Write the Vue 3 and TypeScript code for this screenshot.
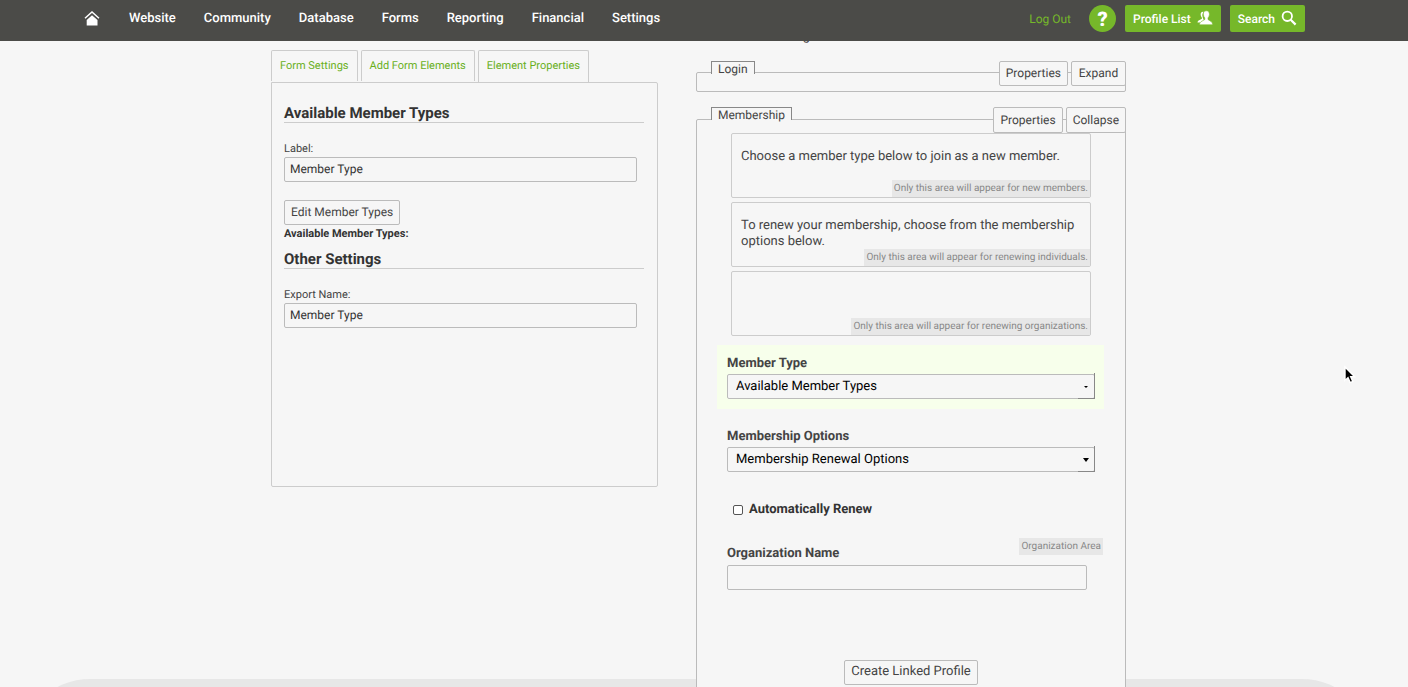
<script setup lang="ts">
import { ref } from 'vue'

const navItems = ['Website', 'Community', 'Database', 'Forms', 'Reporting', 'Financial', 'Settings']
const tabs = ['Form Settings', 'Add Form Elements', 'Element Properties']
const activeTab = ref(2)

const label = ref('Member Type')
const exportName = ref('Member Type')
const memberType = ref('Available Member Types')
const membershipOption = ref('Membership Renewal Options')
const autoRenew = ref(false)
const organization = ref('')

const messages = [
  { text: 'Choose a member type below to join as a new member.', note: 'Only this area will appear for new members.' },
  { text: 'To renew your membership, choose from the membership options below.', note: 'Only this area will appear for renewing individuals.' },
  { text: '', note: 'Only this area will appear for renewing organizations.' },
]
</script>

<template>
  <div class="page">
    <header class="topbar">
      <div class="topbar-inner">
        <nav class="nav">
          <a href="#" class="home" aria-label="Home">
            <svg width="16" height="16" viewBox="0 1 16 16">
              <path d="M8 5.300 13.500 10V15.400H2.700V10Z" fill="#fff" />
              <path d="M1 8.200 8 1.900 15 8.200" fill="none" stroke="#fff" stroke-width="1.500" />
            </svg>
          </a>
          <a v-for="item in navItems" :key="item" href="#">{{ item }}</a>
        </nav>
        <div class="account">
          <a href="#" class="logout">Log Out</a>
          <button type="button" class="help" aria-label="Help">?</button>
          <button type="button" class="green">
            Profile List
            <svg width="16" height="16" viewBox="0 1 16 16">
              <path d="M6.4 1.8C4.3 1.6 3.4 3.1 3.7 5.1c.1 1.1.7 2 1.2 2.6v1.1L1.600 10.400Q.6 11 .5 12.400H3.300L7 10.400 5.800 7.800Q4.700 4.500 6.400 1.800Z" fill="#fff" />
              <path d="M9.300.8C7 .8 6.100 2.400 6.400 4.700c.1 1.500.8 2.500 1.400 3.200v1.600L4.200 11.600Q2.500 12.600 2.400 14.800H15.700Q15.600 12.600 14.200 11.600L11 9.500V7.900c.7-.8 1.300-1.900 1.400-3.200C12.600 2.400 11.600.8 9.300.8Z" fill="#fff" stroke="#76b82a" stroke-width=".6" />
            </svg>
          </button>
          <button type="button" class="green">
            Search
            <svg width="16" height="16" viewBox="0 1 16 16">
              <circle cx="6.300" cy="6.300" r="4.700" fill="none" stroke="#fff" stroke-width="1.800" />
              <path d="m9.700 9.700 4.900 4.900" stroke="#fff" stroke-width="2.200" />
            </svg>
          </button>
        </div>
      </div>
    </header>

    <main class="content">
      <section class="editor">
        <div class="tabs" role="tablist">
          <button
            v-for="(tab, i) in tabs"
            :key="tab"
            type="button"
            role="tab"
            :aria-selected="activeTab === i"
            :class="{ active: activeTab === i }"
            @click="activeTab = i"
          >{{ tab }}</button>
        </div>
        <div class="panel">
          <h2>Available Member Types</h2>
          <label for="label" class="small-label">Label:</label>
          <input id="label" v-model="label" type="text" class="text-input" />
          <button type="button" class="btn edit">Edit Member Types</button>
          <strong>Available Member Types:</strong>
          <h2>Other Settings</h2>
          <label for="export" class="small-label">Export Name:</label>
          <input id="export" v-model="exportName" type="text" class="text-input" />
        </div>
      </section>

      <section class="preview">
        <p class="intro">Use this form to register as a new member or to renew.</p>

        <section class="group login" aria-labelledby="login-title">
          <div class="group-head">
            <h3 id="login-title">Login</h3>
            <div class="actions">
              <button type="button" class="btn">Properties</button>
              <button type="button" class="btn">Expand</button>
            </div>
          </div>
        </section>

        <section class="group membership" aria-labelledby="membership-title">
          <div class="group-head">
            <h3 id="membership-title">Membership</h3>
            <div class="actions">
              <button type="button" class="btn">Properties</button>
              <button type="button" class="btn">Collapse</button>
            </div>
          </div>

          <div class="messages">
            <div v-for="message in messages" :key="message.note" class="message">
              <p>{{ message.text }}</p>
              <span class="note">{{ message.note }}</span>
            </div>
          </div>

          <div class="field selected">
            <label for="member-type">Member Type</label>
            <div class="select-wrap">
              <select id="member-type" v-model="memberType">
                <option>Available Member Types</option>
              </select>
              <svg class="arrow" width="6" height="4" viewBox="0 0 6 4"><path d="M1 1H5L3 3Z" /></svg>
            </div>
          </div>

          <div class="field">
            <label for="membership-options">Membership Options</label>
            <div class="select-wrap">
              <select id="membership-options" v-model="membershipOption">
                <option>Membership Renewal Options</option>
              </select>
              <svg class="arrow" width="6" height="4" viewBox="0 0 6 4"><path d="M0 0H6L3 4Z" /></svg>
            </div>
          </div>

          <label class="check">
            <input v-model="autoRenew" type="checkbox" />
            Automatically Renew
          </label>

          <div class="organization">
            <span class="note area">Organization Area</span>
            <label for="organization">Organization Name</label>
            <input id="organization" v-model="organization" type="text" class="text-input" />
          </div>

          <div class="create">
            <button type="button" class="btn">Create Linked Profile</button>
          </div>
        </section>
      </section>
    </main>

    <div class="footer-band"></div>

    <svg class="pointer" width="14" height="20" viewBox="0 0 14 20">
      <path d="M2 2V15.500L5 12.700 7.200 17.600 9.800 16.400 7.700 11.700H11.700Z" fill="#000" stroke="#fff" stroke-width="1.400" />
    </svg>
  </div>
</template>

<style>
body {
  margin: 0;
  background: #f6f6f6;
}
</style>

<style scoped>
* {
  box-sizing: border-box;
}

.page {
  position: relative;
  height: 100vh;
  overflow: hidden;
  background: #f6f6f6;
  color: #444;
  font-family: Roboto, "Liberation Sans", sans-serif;
  font-size: 13px;
  line-height: 16px;
  text-rendering: geometricPrecision;
}

button,
input,
select {
  font: inherit;
  text-rendering: inherit;
}

h2,
h3,
p {
  margin: 0;
}

.topbar {
  position: relative;
  z-index: 2;
  padding: 5px 103px 9px 84px;
  background: #4b4b48;
}

.topbar-inner,
.nav,
.account {
  display: flex;
  align-items: center;
}

.topbar-inner {
  justify-content: space-between;
}

.nav {
  gap: 28px;
}

.nav a {
  color: #fff;
  font-weight: 500;
  text-decoration: none;
}

.nav .home {
  display: flex;
  width: 17px;
}

.home svg {
  flex: none;
}

.topbar svg {
  overflow: visible;
}

.account {
  gap: 9px;
}

.logout {
  margin-right: 9px;
  color: #76b82a;
  font-size: 12px;
  text-decoration: none;
}

.help,
.green {
  height: 27px;
  border: 0;
  background: #76b82a;
  color: #fff;
  font-weight: 500;
}

.help {
  width: 27px;
  padding: 0;
  border-radius: 50%;
  font-size: 20px;
  font-weight: 900;
}

.green {
  display: flex;
  align-items: center;
  gap: 6px;
  padding: 0 8px;
  border-radius: 2px;
  font-size: 12px;
}

.content {
  position: relative;
  z-index: 1;
  display: grid;
  grid-template-columns: 387fr 430fr;
  gap: 38px;
  width: 866px;
  max-width: 100%;
  margin: 0 auto;
  padding-right: 11px;
}

.editor {
  padding-top: 9px;
}

.tabs {
  display: flex;
  align-items: flex-start;
  gap: 3px;
}

.tabs button {
  height: 31px;
  padding: 0 8px;
  border: 1px solid #ccc;
  border-bottom: 0;
  border-radius: 2px 2px 0 0;
  background: #f6f6f6;
  color: #69b01c;
  font-size: 11px;
}

.tabs .active {
  height: 32px;
  padding-bottom: 1px;
}

.panel {
  display: flex;
  flex-direction: column;
  align-items: flex-start;
  height: 405px;
  padding: 21px 13px 12px 12px;
  border: 1px solid #ccc;
  border-radius: 0 2px 2px 2px;
}

.panel h2 {
  width: 100%;
  height: 19px;
  border-bottom: 1px solid #ccc;
  color: #333;
  font-size: 15px;
  line-height: 18px;
}

.small-label {
  margin-top: 18px;
  font-size: 11px;
}

.text-input {
  height: 25px;
  padding: 0 5px 1px;
  border: 1px solid #bbb;
  border-radius: 2px;
  background: #f6f6f6;
  color: #333;
}

.panel .text-input {
  width: calc(100% - 7px);
  font-size: 12px;
}

.btn {
  min-width: 55px;
  height: 25px;
  padding: 0 6px 1px;
  border: 1px solid #bbb;
  border-radius: 2px;
  background: #f6f6f6;
  color: #444;
  font-size: 12px;
}

.edit {
  margin-top: 18px;
}

.panel strong {
  margin: 1px 0 8px;
  color: #333;
  font-size: 11px;
}

.intro {
  height: 20px;
  margin-top: -12px;
  margin-bottom: 23px;
}

.group {
  border: 1px solid #bbb;
  border-radius: 2px;
  background: #f6f6f6;
}

.group-head {
  display: flex;
  align-items: flex-start;
  justify-content: space-between;
  margin: -12px -1px 0 14px;
}

.group-head h3 {
  height: 13px;
  padding: 0 6px;
  border: 1px solid #888;
  border-bottom: 0;
  background: #f6f6f6;
  font-size: 12px;
  font-weight: 400;
  line-height: 14px;
}

.actions {
  display: flex;
  gap: 3px;
}

.login {
  padding-bottom: 5px;
}

.membership {
  margin-top: 27px;
  padding-bottom: 40px;
}

.membership .group-head {
  margin-top: -13px;
}

.membership .group-head .btn {
  height: 26px;
  padding-bottom: 0;
}

.messages {
  display: grid;
  gap: 4px;
  margin: 0 34px;
}

.message {
  position: relative;
  min-height: 65px;
  padding: 15px 9px 0;
  border: 1px solid #ccc;
  border-radius: 2px;
}

.note {
  padding: 0 2px;
  background: #e7e7e7;
  color: #888;
  font-size: 10px;
  line-height: 17px;
}

.message .note {
  position: absolute;
  right: 0;
  bottom: 0;
}

.field {
  margin: 9px 21px 0 20px;
  padding: 11px 9px 10px 10px;
}

.field label {
  display: block;
  margin-bottom: 2px;
  font-weight: 700;
}

.selected {
  background: #f7ffeb;
}

.select-wrap {
  position: relative;
}

.select-wrap::after {
  position: absolute;
  right: 0;
  bottom: 0;
  width: 16px;
  height: 25px;
  border: solid #888;
  border-width: 0 1px 1px 0;
  content: "";
  pointer-events: none;
}

.select-wrap select {
  display: block;
  width: 100%;
  height: 25px;
  padding: 1px 8px 0;
  appearance: none;
  border: 1px solid #bbb;
  border-radius: 2px;
  background: #f6f6f6;
  color: #000;
}

.arrow {
  position: absolute;
  top: 11px;
  right: 6px;
  pointer-events: none;
}

.check {
  display: flex;
  align-items: center;
  gap: 6px;
  margin: 20px 36px 0;
  color: #333;
  font-weight: 700;
}

.check input {
  width: 10px;
  height: 10px;
  margin: 0;
  appearance: none;
  border: 1px solid #555;
  border-radius: 2px;
  background: #fff;
}

.check input:checked {
  background: #555;
}

.organization {
  position: relative;
  margin: 28px 38px 0 30px;
}

.organization label {
  display: block;
  margin-bottom: 3px;
  font-weight: 700;
}

.organization .text-input {
  display: block;
  width: 100%;
}

.area {
  position: absolute;
  top: -8px;
  right: -16px;
}

.create {
  margin-top: 70px;
  text-align: center;
}

.create .btn {
  font-size: 13px;
}

.footer-band {
  position: absolute;
  right: 36px;
  bottom: -132px;
  left: 20px;
  height: 140px;
  border-radius: 70px;
  background: #e7e7e7;
}

.pointer {
  position: absolute;
  top: 365px;
  left: 1343px;
  z-index: 3;
}
</style>
